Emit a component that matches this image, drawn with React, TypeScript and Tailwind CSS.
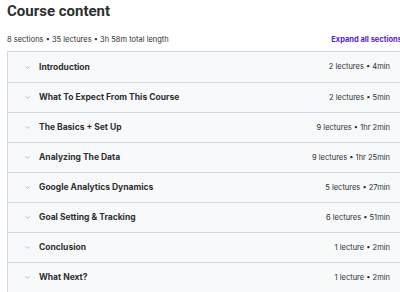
import { ChevronDown } from "lucide-react";

const SECTIONS = [
  { title: "Introduction", meta: "2 lectures • 4min" },
  { title: "What To Expect From This Course", meta: "2 lectures • 5min" },
  { title: "The Basics + Set Up", meta: "9 lectures • 1hr 2min" },
  { title: "Analyzing The Data", meta: "9 lectures • 1hr 25min" },
  { title: "Google Analytics Dynamics", meta: "5 lectures • 27min" },
  { title: "Goal Setting & Tracking", meta: "6 lectures • 51min" },
  { title: "Conclusion", meta: "1 lecture • 2min" },
  { title: "What Next?", meta: "1 lecture • 2min" },
];

export default function App() {
  return (
    <div
      className="w-[400px] h-[292px] overflow-hidden bg-white text-[#2d2f31]"
      style={{ fontFamily: "Inter, 'Noto Sans', sans-serif" }}
    >
      <div className="w-[400px] pl-[7px]">
        <h2
          className="pt-[1px] text-[15px] leading-[20px] font-bold"
          style={{ fontFamily: "Roboto, Inter, sans-serif" }}
        >
          Course content
        </h2>

        <div className="mt-[12px] flex items-center justify-between h-[14px]">
          <span className="text-[7.5px] text-[#2d2f31]">
            8 sections • 35 lectures • 3h 58m total length
          </span>
          <span className="text-[7.5px] font-bold text-[#5624d0] whitespace-nowrap -mr-[2px]">
            Expand all sections
          </span>
        </div>

        <div className="mt-[4px] border border-[#d1d7dc] w-[410px]">
          {SECTIONS.map((s, i) => (
            <div
              key={s.title}
              className={`flex items-center justify-between h-[30px] bg-[#f7f9fa] pl-[16px] pr-[26px] ${
                i > 0 ? "border-t border-[#d1d7dc]" : ""
              }`}
            >
              <div className="flex items-center gap-[8px]">
                <ChevronDown size={7} strokeWidth={2} className="text-[#8a8f93]" />
                <span className="text-[8.5px] font-bold">{s.title}</span>
              </div>
              <span className="text-[7.5px] text-[#2d2f31]">{s.meta}</span>
            </div>
          ))}
        </div>
      </div>
    </div>
  );
}
